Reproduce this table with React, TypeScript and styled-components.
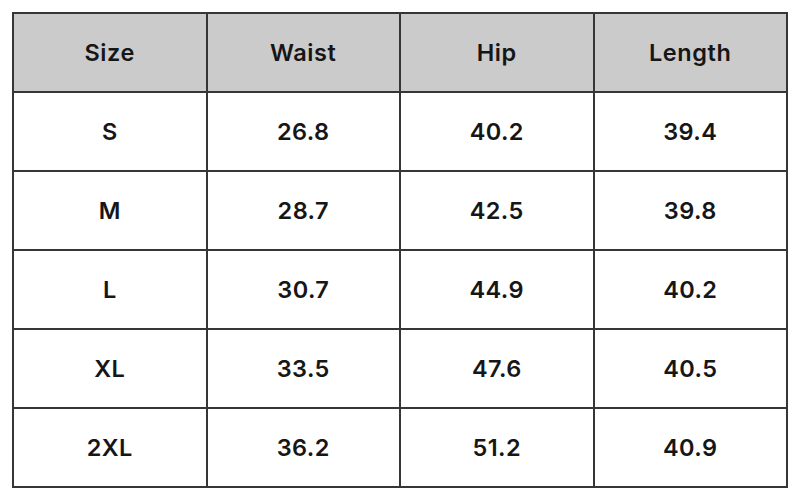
import React from "react";
import styled, { createGlobalStyle } from "styled-components";

const Global = createGlobalStyle`
  html, body { margin: 0; padding: 0; background: #ffffff; }
  body { font-family: Inter, "Noto Sans", Arial, sans-serif; }
`;

const Page = styled.div`
  width: 800px;
  height: 500px;
  padding: 12px;
  box-sizing: border-box;
`;

const Grid = styled.div`
  width: 776px;
  height: 476px;
  box-sizing: border-box;
  display: grid;
  grid-template-columns: repeat(4, 1fr);
  grid-template-rows: repeat(6, 1fr);
  gap: 2px;
  padding: 2px;
  background: #363636;
`;

const Cell = styled.div<{ $head?: boolean }>`
  display: flex;
  align-items: center;
  justify-content: center;
  background: ${(p) => (p.$head ? "#cbcbcb" : "#ffffff")};
  color: #161616;
  font-size: 23.5px;
  font-weight: 600;
  letter-spacing: ${(p) => (p.$head ? "0.6px" : "0.4px")};
`;

const head = ["Size", "Waist", "Hip", "Length"];
const rows = [
  ["S", "26.8", "40.2", "39.4"],
  ["M", "28.7", "42.5", "39.8"],
  ["L", "30.7", "44.9", "40.2"],
  ["XL", "33.5", "47.6", "40.5"],
  ["2XL", "36.2", "51.2", "40.9"],
];

export default function App() {
  return (
    <Page>
      <Global />
      <Grid>
        {head.map((h) => (
          <Cell key={h} $head>
            {h}
          </Cell>
        ))}
        {rows.map((r) =>
          r.map((c, i) => <Cell key={r[0] + i}>{c}</Cell>)
        )}
      </Grid>
    </Page>
  );
}
